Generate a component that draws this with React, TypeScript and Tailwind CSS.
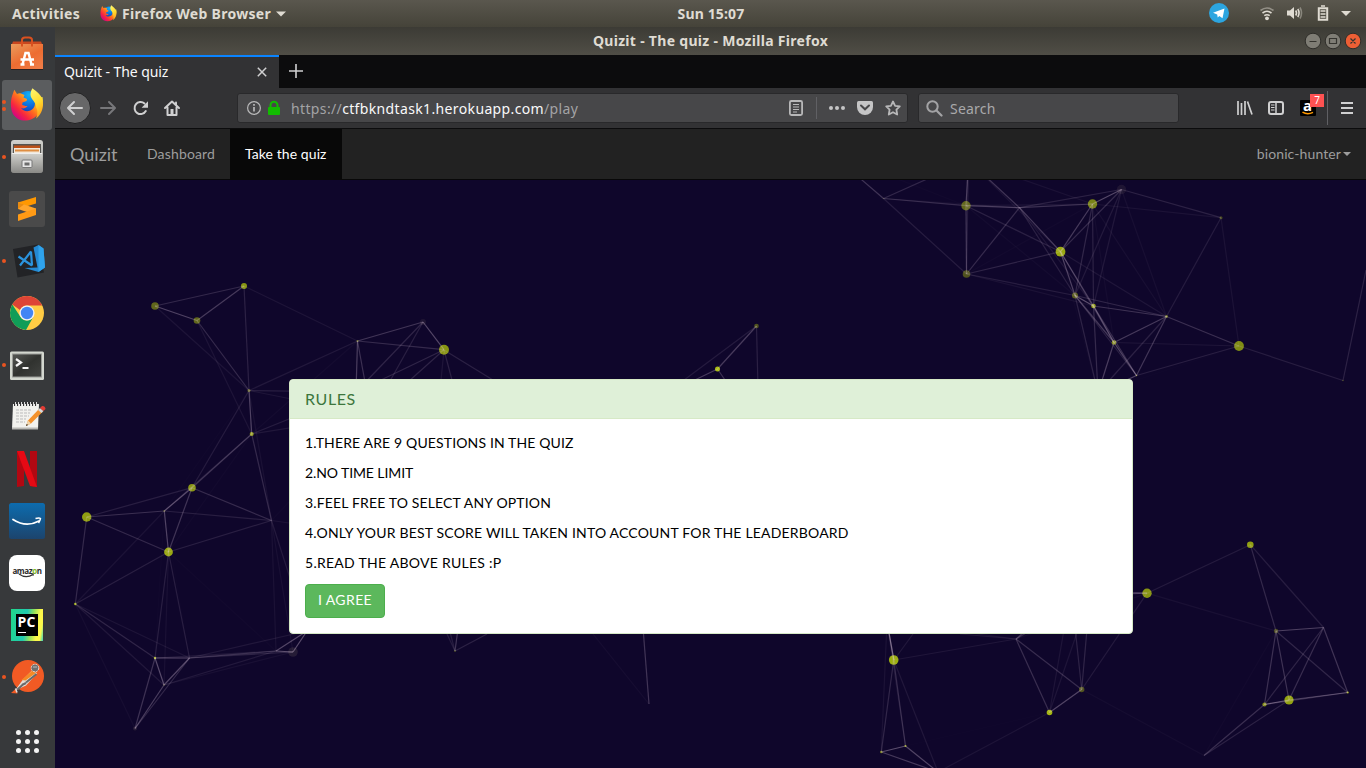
import type { ReactNode } from "react";

/* ---------- particle network ---------- */

type Node = [x: number, y: number, r: number, o: number];

const NODES: Node[] = [
  [155, 306, 3.8, 0.5], [197, 320.5, 3.3, 0.5], [244, 286, 3, 0.75], [249, 390.5, 1.5, 0.45],
  [251.7, 434, 2, 0.8], [192, 487.7, 3.8, 0.75], [86.7, 517, 4.7, 0.8], [164.3, 511, 1, 0.35],
  [271.5, 520.5, 0, 0], [168.5, 552, 4.4, 0.85], [75.3, 604, 1.2, 0.9], [155, 658, 1.2, 0.9],
  [189.5, 658, 0, 0], [164, 685, 0.8, 0.3], [135, 728.5, 2, 0.15], [276, 651, 0, 0],
  [293, 652, 4.8, 0.14], [357.5, 341, 1, 0.5], [423, 322, 3, 0.1], [444, 349.7, 5, 0.75],
  [356, 392, 0, 0], [371, 415, 0, 0], [307, 631, 0, 0],
  [883.5, 198.5, 0.6, 0.2], [966, 205.7, 4.7, 0.5], [966.5, 274, 3.8, 0.4], [1019.5, 207.7, 0, 0],
  [1092.5, 204, 4.7, 0.65], [1060.5, 251.7, 4.9, 0.85], [1121.5, 189.5, 4.7, 0.1],
  [1075, 295.5, 3, 0.45], [1093.5, 306, 2.3, 0.8], [1114, 342.5, 2.3, 0.7], [1166.5, 316.5, 1.3, 0.7],
  [1136.5, 375.5, 0.7, 0.7], [1221, 217.7, 1.5, 0.35], [1239, 346, 4.9, 0.7], [1343, 380.5, 0.8, 0.3],
  [968.5, 160.5, 0, 0], [830, 152.5, 0, 0], [1098, 393, 0, 0],
  [756.5, 326, 2.3, 0.4], [717.5, 369, 2.5, 0.95], [664, 395, 0, 0], [759, 430, 0, 0],
  [893.7, 660, 4.8, 0.88], [1016, 639, 0, 0], [1081.7, 689.5, 2.7, 0.4], [1049.5, 712.5, 2.8, 0.92],
  [881.3, 752, 1.3, 0.6], [905.5, 746, 1.1, 0.8], [938, 772, 4, 0.2], [1147, 593.2, 4.7, 0.75],
  [1250.3, 544.7, 3.3, 0.8], [1276, 631, 2.2, 0.35], [1323.5, 627.5, 0, 0], [1347.7, 692.5, 1.1, 0.85],
  [1289, 700, 4.6, 0.82], [1264.5, 704.5, 2.1, 0.7], [1204, 755.5, 0, 0],
  [887, 622, 0, 0], [1071, 590, 0, 0], [1090, 595, 0, 0], [455, 651, 1, 0.3],
];

const EXTRA: [number, number, number, number, number][] = [
  [444, 350, 441, 380, 0.07], [444, 350, 452, 380, 0.12], [444, 350, 493, 380, 0.12],
  [455, 651, 447, 634, 0.1], [455, 651, 450.5, 634, 0.1], [455, 651, 457.3, 634, 0.22],
  [455, 651, 487, 634, 0.13], [649, 704, 643.5, 634, 0.22], [649, 704, 593, 634, 0.03],
  [894, 660, 913, 634, 0.08], [894, 660, 889.3, 634, 0.3], [1016, 639, 960, 634, 0.08],
  [271.5, 520.5, 289, 523, 0.06], [1343, 380.5, 1366, 270, 0.13],
];

const REACH = 150;
const LINKS = [...EXTRA];
NODES.forEach((a, i) =>
  NODES.slice(i + 1).forEach((b) => {
    const d = Math.hypot(a[0] - b[0], a[1] - b[1]);
    if (d < REACH) LINKS.push([a[0], a[1], b[0], b[1], 0.4 * (1 - d / REACH)]);
  }),
);

function Particles() {
  return (
    <svg className="absolute inset-0 h-full w-full" viewBox="55 180 1311 588">
      {NODES.map(([x, y, r, o], i) => (
        <circle key={i} cx={x} cy={y} r={r} fill={o < 0.2 ? "#b0a080" : "#b1c60c"} opacity={o} />
      ))}
      {LINKS.map(([x1, y1, x2, y2, o], i) => (
        <line key={i} x1={x1} y1={y1} x2={x2} y2={y2} stroke="#f0d8ee" strokeWidth="1.2" opacity={o} />
      ))}
    </svg>
  );
}

/* ---------- icons ---------- */

function Firefox({ size, id }: { size: number; id: string }) {
  return (
    <svg width={size} height={size} viewBox="0 0 34 34">
      <defs>
        <linearGradient id={`${id}o`} x1="0.9" y1="0.1" x2="0.15" y2="0.85">
          <stop offset="0" stopColor="#fff24a" />
          <stop offset="0.3" stopColor="#ffc21c" />
          <stop offset="0.55" stopColor="#ff6d1f" />
          <stop offset="0.8" stopColor="#f7263f" />
          <stop offset="1" stopColor="#d6097c" />
        </linearGradient>
        <radialGradient id={`${id}b`} cx="0.55" cy="0.15" r="0.9">
          <stop offset="0" stopColor="#12b4f5" />
          <stop offset="0.55" stopColor="#0a63d8" />
          <stop offset="1" stopColor="#2a1b8a" />
        </radialGradient>
        <linearGradient id={`${id}y`} x1="0.3" y1="0" x2="0.6" y2="1">
          <stop offset="0" stopColor="#fff36a" />
          <stop offset="0.5" stopColor="#ffdc2e" />
          <stop offset="1" stopColor="#ff9a1a" />
        </linearGradient>
      </defs>
      <circle cx="18" cy="15.5" r="12.5" fill={`url(#${id}b)`} />
      <path d="M2.2 7.5 4.3 1.8 7 6c1.200-.6 2.500-.8 4-.5l3.500 1.500-1 2.500 3.500 1.500-.5 2-4 1.500-.3 2.500c1.500.2 3 1.500 5.300 1-1.500 2.500-4.500 2.800-6.500 2 2 3 7 4.500 11 1.500 3.500-2.700 3.500-7 2-10.500l8.500-2c1.500 9-3 18.500-10.500 22-7 3.200-15 1.500-19-5C.5 21.500.2 13.500 2.200 7.500Z" fill={`url(#${id}o)`} />
      <path d="M22.500.3c3.500 3 8.500 6 10 11.500 1.700 7-.8 14.500-6.500 18.700 1.500-4 2.300-8-.1-11.500C27 14.500 20 11.500 20.500 6c.2-2.500 1-4.200 2-5.700Z" fill={`url(#${id}y)`} />
    </svg>
  );
}

const Svg = ({ children, s = 50 }: { children: ReactNode; s?: number }) => (
  <svg width={s} height={s} viewBox={`0 0 ${s} ${s}`}>{children}</svg>
);

const SoftwareIcon = () => (
  <Svg>
    <defs>
      <linearGradient id="bag" x2="0.7" y2="1"><stop stopColor="#ea9c5d" /><stop offset="0.6" stopColor="#ed6c31" /><stop offset="1" stopColor="#ef7b45" /></linearGradient>
    </defs>
    <path d="M10 16 11 13.500h28l1 2.500z" fill="#c9471f" />
    <path d="M9 16h32v25.500H9z" fill="url(#bag)" />
    <path d="M9 41.500h32" stroke="#2a2020" strokeWidth="1" />
    <path d="M20 18.500v-6.500q0-2.500 3-2.500h4q3 0 3 2.500v6.500" fill="none" stroke="#d9501f" strokeWidth="2" />
    <path d="M20.500 36.500 23.500 25h3l3 11.500M18.500 31.500h13.500M18.500 36.500h4M28 36.500h4" fill="none" stroke="#fff" strokeWidth="2.500" />
  </Svg>
);

const FilesIcon = () => (
  <Svg>
    <defs><linearGradient id="cab" y2="1" x2="0"><stop stopColor="#d2d2ce" /><stop offset="1" stopColor="#8b8b88" /></linearGradient></defs>
    <rect x="9" y="8" width="32" height="33" rx="3" fill="url(#cab)" />
    <path d="M11 12h28v10H11z" fill="#555450" />
    <path d="M12 13.500h26v8H12z" fill="#bd5118" /><path d="M12 16h26v6H12z" fill="#f3e8d8" /><path d="M13 17.500h24v2H13z" fill="#df8e42" />
    <path d="M9.500 21h31v18q0 1.500-1.500 1.500H11q-1.500 0-1.500-1.500z" fill="url(#cab)" />
    <path d="M10 21.500h30" stroke="#eee" />
    <rect x="20" y="28" width="10" height="7.500" rx="1" fill="#e8e8e8" stroke="#777" />
    <rect x="22.500" y="30.500" width="5" height="3" fill="#6c6c6c" />
  </Svg>
);

const SublimeIcon = () => (
  <Svg>
    <rect x="7" y="7" width="36" height="36" rx="3" fill="#4a4a4a" />
    <path d="m16 18.500 18-5.500v6.500L16 25z" fill="#ff9800" />
    <path d="m16 18.500 18 6V31l-18-6z" fill="#ffa52b" />
    <path d="m16 30.500 18-6V31l-18 6z" fill="#ff9a15" />
    <path d="m16 18.500 6 2-6 4.500z" fill="#e98a10" />
  </Svg>
);

const CodeIcon = () => (
  <Svg>
    <path d="m11 13 25-4.500 6 28L15.500 41.500z" fill="#222326" />
    <path d="m31.500 11.500 5-2.500 5 3.500 1.500 19-6.500 4.500-14-4 13-.5z" fill="#2489d3" />
    <path d="m36.500 9 5 3.500 1.500 19-6.500 4.500z" fill="#2fa3ec" />
    <path d="M16.500 20.500 30 29.500m-1-14L18 29.500" stroke="#2b93dd" strokeWidth="2.200" fill="none" />
    <path d="m29 15.500 1 14" stroke="#2b93dd" strokeWidth="2.200" />
  </Svg>
);

const ChromeIcon = () => (
  <Svg>
    <circle cx="25" cy="25" r="17" fill="#fc4" />
    <path d="M10.300 16.500A17 17 0 0 1 39.700 16.500L40 17.500H25A7.600 7.600 0 0 0 18 22z" fill="#de4436" />
    <path d="M10.300 16.500A17 17 0 0 0 24 42l7.500-13.500a7.600 7.600 0 0 1-13.300 0z" fill="#109d58" />
    <circle cx="25" cy="25" r="7.600" fill="#f1f1f1" /><circle cx="25" cy="25" r="6.200" fill="#4285f4" />
  </Svg>
);

const TerminalIcon = () => (
  <Svg>
    <defs><linearGradient id="scr" x2="1" y2="1"><stop stopColor="#555754" /><stop offset="0.5" stopColor="#30322f" /><stop offset="1" stopColor="#414340" /></linearGradient></defs>
    <rect x="8" y="11.500" width="34" height="28.500" rx="1.500" fill="#d3d7cf" />
    <rect x="10" y="13.500" width="30" height="24" fill="#999b97" />
    <rect x="11" y="14.500" width="28" height="22" fill="url(#scr)" />
    <path d="m14 19 5 3.500-5 3.500M20.500 28h6" fill="none" stroke="#f5f5f5" strokeWidth="2.200" />
  </Svg>
);

const NotesIcon = () => (
  <Svg>
    <path d="M11 12h26l-1 25H10z" fill="#f2f2ee" /><path d="M10 35.500h26v2H10z" fill="#b9b9b4" />
    <path d="M12 12h24" stroke="#333" strokeWidth="4" strokeDasharray="1.500 1.500" /><path d="M13 12h24" stroke="#ddd" strokeWidth="4" strokeDasharray="1 2" />
    <path d="M14 18h16M14 21h14M14 24h13M14 27h10M14 30h9" stroke="#bbb" strokeWidth="1" strokeDasharray="3 1" />
    <path d="m24 34 2-5.500L37 17l3.500 3L29 31.500z" fill="#f4922b" /><path d="m26 28.500 3 3-5 2.500z" fill="#eed5ad" /><path d="m24 34 .8-2 1.200 1z" fill="#111" />
    <path d="m36 18 2-2 3.500 3-2 2z" fill="#d8d8d8" /><path d="m38 16 2-2q3-.5 3.500 3l-2 2z" fill="#e23d35" />
  </Svg>
);

const NetflixIcon = () => (
  <Svg>
    <path d="M15 7h7v35l-7 1zM28 7h7v36l-7-1z" fill="#b10812" />
    <path d="M15 7h7l13 36-7-1z" fill="#e50914" />
  </Svg>
);

const PrimeIcon = () => (
  <Svg>
    <defs><linearGradient id="prime" y2="1" x2="0"><stop stopColor="#0d6cae" /><stop offset="1" stopColor="#1c446d" /></linearGradient></defs>
    <rect x="7" y="7" width="36" height="36" rx="2.500" fill="url(#prime)" />
    <path d="M11 23.500q13 8.500 26 1.500" fill="none" stroke="#fff" strokeWidth="1.800" strokeLinecap="round" />
    <path d="M33.500 22.500q4-.8 5 0-.3 2-2 4.500" fill="none" stroke="#fff" strokeWidth="1.500" />
  </Svg>
);

const AmazonIcon = () => (
  <div className="relative flex h-[36px] w-[36px] justify-center rounded-[8px] bg-white pt-[9px] font-['Open_Sans',sans-serif] text-[8px] leading-[14px] font-bold tracking-[-0.4px] text-[#2b2b2b]">
    amaz<span className="text-[#7db928]">o</span>n
    <svg className="absolute top-[18px] left-[9px]" width="18" height="6" viewBox="0 0 18 6">
      <path d="M1 1q7 5 14 .5" fill="none" stroke="#333" strokeWidth="1.200" /><path d="M13 .8h2.500L15 3" fill="none" stroke="#333" strokeWidth="0.800" />
    </svg>
  </div>
);

const PyCharmIcon = () => (
  <div className="flex h-[32px] w-[32px] items-center justify-center bg-[linear-gradient(100deg,#21d789_0%,#20c9b0_45%,#8ee05c_62%,#fcf84a_80%,#fcf84a_90%,#35d1c0_100%)]">
    <div className="relative h-[22px] w-[22px] bg-black pt-px pl-[1.5px] font-['Open_Sans',sans-serif] text-[14px] leading-[14px] font-bold tracking-[0.2px] text-white">
      PC
      <div className="absolute bottom-[3px] left-[2px] h-[1.5px] w-[8px] bg-white" />
    </div>
  </div>
);

const PostmanIcon = () => (
  <Svg>
    <circle cx="26" cy="24" r="16" fill="#f15a24" />
    <path d="m13 38.500 8-11L31 17.500l4 4-11 12z" fill="#e4ddd5" />
    <path d="m19.500 28 11.500-10 3 3-10.500 7.500z" fill="#f58a25" />
    <path d="m24 30.500 10.500-8.500M15.500 37.500l6-5.500M20 33l4-2" stroke="#6a6a6a" strokeWidth="2" fill="none" />
    <circle cx="33" cy="16" r="3.800" fill="#6f6f6f" stroke="#e6ddd6" strokeWidth="1" strokeDasharray="2 1" /><path d="M31 15h4" stroke="#bbb" />
    <path d="m9 41 5-4.500 1.500 5z" fill="#f15a24" />
    <path d="m13.500 36.500 1.500 4" stroke="#ddd" strokeWidth="1.500" />
  </Svg>
);

const DOCK: { name: string; icon: ReactNode; dots?: number }[] = [
  { name: "software", icon: <SoftwareIcon /> },
  { name: "firefox", icon: <Firefox size={34} id="dock" />, dots: 2 },
  { name: "files", icon: <FilesIcon />, dots: 1 },
  { name: "sublime", icon: <SublimeIcon /> },
  { name: "code", icon: <CodeIcon />, dots: 1 },
  { name: "chrome", icon: <ChromeIcon /> },
  { name: "terminal", icon: <TerminalIcon />, dots: 1 },
  { name: "notes", icon: <NotesIcon /> },
  { name: "netflix", icon: <NetflixIcon /> },
  { name: "prime", icon: <PrimeIcon /> },
  { name: "amazon", icon: <AmazonIcon /> },
  { name: "pycharm", icon: <PyCharmIcon /> },
  { name: "postman", icon: <PostmanIcon />, dots: 1 },
];

function Dock() {
  return (
    <aside className="flex w-[55px] shrink-0 flex-col bg-[#37393b]">
      {DOCK.map(({ name, icon, dots = 0 }) => (
        <div key={name} className="relative flex h-[52px] w-[54px] shrink-0 items-center justify-center">
          <div className={dots === 2 ? "flex h-[50px] w-[50px] items-center justify-center rounded-[3px] bg-[#5b5d5f]" : "flex h-[50px] w-[50px] items-center justify-center"}>
            {icon}
          </div>
          <div className="absolute top-0 left-[2px] flex h-full flex-col justify-center gap-[3px]">
            {Array.from({ length: dots }, (_, i) => (
              <span key={i} className="h-[4px] w-[4px] rounded-full bg-[#e95420]" />
            ))}
          </div>
        </div>
      ))}
      <div className="grid w-[54px] flex-1 place-content-center grid-cols-[repeat(3,5px)] gap-[4px] pt-[12px]">
        {Array.from({ length: 9 }, (_, i) => (
          <span key={i} className="h-[5px] w-[5px] rounded-full bg-[#f4f4f4]" />
        ))}
      </div>
    </aside>
  );
}

/* ---------- desktop bars ---------- */

function TopBar() {
  return (
    <header className="flex h-[27px] shrink-0 items-center bg-linear-to-b from-[#5a574e] to-[#454339] font-['Noto_Sans',sans-serif] text-[14px] font-bold text-[#dfdbd2]">
      <span className="w-[97px] pl-[12px] tracking-[0.3px]">Activities</span>
      <span className="flex w-[22px] justify-center"><Firefox size={17} id="bar" /></span>
      <span className="w-[156px] pl-[3px] tracking-[0.3px] whitespace-nowrap">Firefox Web Browser</span>
      <svg className="ml-[1px]" width="10" height="6" viewBox="0 0 10 6"><path d="M0 .5h10L5 5.500z" fill="#dfdbd2" /></svg>
      <span className="ml-[385px] w-[80px] pb-px text-center tracking-[0.15px] whitespace-nowrap">Sun 15:07</span>
      <svg className="ml-auto" width="157" height="27" viewBox="1209 0 157 27">
        <circle cx="1219" cy="13" r="10" fill="#2ca5e0" />
        <path d="m1213 12.800 11.500-4.300-2 9.700-3.200-2.200-1.600 1.600-.5-3z" fill="#fff" />
        <g fill="none" stroke="#dfdbd2" strokeWidth="1.600">
          <path d="M1260.500 10.500q6.500-5 13 0" opacity="0.45" /><path d="M1262.500 13q4.500-3.500 9 0M1264.300 15.700q2.700-2 5.400 0" />
          <path d="M1295.700 10.500q1.700 2.500 0 5M1297.800 9q2.500 4 0 8" /><path d="M1300 7.500q3 5.500 0 11" opacity="0.4" />
          <path d="M1318.800 8.300h8.400v11.400h-8.400z" strokeWidth="2" /><path d="M1321 6h4M1320.500 11h5M1320.500 14h5M1320.500 17h5" />
        </g>
        <circle cx="1267" cy="18.300" r="1.900" fill="#dfdbd2" />
        <path d="M1287 10.500h3l4-3.500v12l-4-3.500h-3z" fill="#dfdbd2" />
        <path d="M1341 11h10l-5 5z" fill="#dfdbd2" />
      </svg>
    </header>
  );
}

function TitleBar() {
  return (
    <div className="flex h-[28px] shrink-0 items-center bg-linear-to-b from-[#3c3b35] to-[#504e46] font-['Noto_Sans',sans-serif] text-[14px] font-bold text-[#dfdbd2]">
      <span className="flex-1 pb-[2px] pl-[80px] text-center tracking-[0.3px]">Quizit - The quiz - Mozilla Firefox</span>
      <svg width="80" height="28" viewBox="1286 27 80 28">
        <g stroke="#2f2e2a"><circle cx="1313" cy="41" r="7.800" fill="#7f7d75" /><circle cx="1333" cy="41" r="7.800" fill="#7f7d75" /><circle cx="1353" cy="41" r="7.800" fill="#ee5f35" /></g>
        <path d="M1309.500 41.500h7M1329.500 38.500h7v5h-7zM1350.500 38.500l5 5m0-5-5 5" fill="none" stroke="#35342f" strokeWidth="1.200" />
      </svg>
    </div>
  );
}

function BrowserChrome() {
  return (
    <div className="font-['Noto_Sans',sans-serif] text-[14px]">
      <div className="flex h-[33px] border-b border-[#0c0c0d] bg-[#0c0c0d]">
        <div className="flex h-[33px] w-[224px] items-center border-t-2 border-[#0a84ff] bg-[#323234] pl-[9px] text-[#f9f9fa]">
          <span className="flex-1 pb-[2px] tracking-[-0.08px]">Quizit - The quiz</span>
          <svg className="mr-[12px] mb-px" width="10" height="10" viewBox="0 0 10 10"><path d="m.8.8 8.400 8.400M9.200.8.8 9.200" stroke="#d0d0d1" strokeWidth="1.500" /></svg>
        </div>
        <svg className="mt-[9px] ml-[10px]" width="14" height="14" viewBox="0 0 14 14"><path d="M7 0v14M0 7h14" stroke="#d0d0d1" strokeWidth="1.600" /></svg>
      </div>
      <div className="flex h-[41px] items-center border-b border-[#0c0c0d] bg-[#323234]">
        <svg width="182" height="40" viewBox="55 88 182 40">
          <circle cx="75" cy="108" r="15.500" fill="#676768" stroke="#222223" />
          <g fill="none" stroke="#d0d0d1" strokeWidth="2" strokeLinecap="round" strokeLinejoin="round">
            <path d="M82 108H68.500M74 102l-6 6 6 6" />
            <path d="M101 108h13.500M109 102l6 6-6 6" stroke="#77777a" />
            <path d="M144.500 103.500a6 6 0 1 0 1.300 7.500" />
            <path d="m165 108 7-6.500 7 6.500M167.500 107.500v7.500h9v-7.500" />
            <path d="M176 102.500v2" />
          </g>
          <path d="M148 101.300v6.400h-6.400z" fill="#d0d0d1" />
          <path d="M170.500 109h3v5h-3z" fill="#d0d0d1" />
        </svg>
        <div className="flex h-[30px] w-[671px] items-center rounded-[3px] border border-[#29292b] bg-[#474749]">
          <svg className="ml-[8px]" width="36" height="18" viewBox="246 99 36 18">
            <circle cx="254" cy="108" r="6.400" fill="none" stroke="#b8b8b9" strokeWidth="1.200" />
            <path d="M254 107v4.500M254 104v1.700" stroke="#b8b8b9" strokeWidth="1.700" />
            <rect x="268" y="107" width="12" height="8" rx="1" fill="#12bc00" /><path d="M270.500 108v-2.700a3.500 3.500 0 0 1 7 0v2.700" fill="none" stroke="#12bc00" strokeWidth="2" />
          </svg>
          <span className="ml-[9px] flex-1 tracking-[0.36px] whitespace-nowrap text-[#a3a3a5]">https://<span className="text-[#f9f9fa]">ctfbkndtask1.herokuapp.com</span>/play</span>
          <svg width="120" height="28" viewBox="787 94 120 28">
            <g fill="none" stroke="#b8b8b9" strokeWidth="1.800">
              <rect x="789.900" y="101" width="12.200" height="14" rx="1.500" /><path d="M793 104.500h6M793 107h6M793 109.500h6M793 112h4" strokeWidth="1" />
              <path d="m893 101.500 2.100 4.300 4.700.6-3.400 3.300.8 4.800-4.200-2.300-4.200 2.300.8-4.800-3.400-3.300 4.700-.6z" strokeLinejoin="round" />
            </g>
            <path d="M816.500 97v22" stroke="#606064" />
            <g fill="#c5c5c6"><circle cx="831" cy="108" r="2" /><circle cx="837" cy="108" r="2" /><circle cx="843" cy="108" r="2" />
              <path d="M858.500 101h13q1.500 0 1.500 1.500v4.500a8 8 0 0 1-16 0v-4.500q0-1.500 1.500-1.500z" /></g>
            <path d="m861 105.500 4 3.800 4-3.800" fill="none" stroke="#474749" strokeWidth="2" strokeLinecap="round" />
          </svg>
        </div>
        <div className="ml-[10px] flex h-[30px] w-[261px] items-center rounded-[3px] border border-[#29292b] bg-[#474749] text-[#a9a9ab]">
          <svg className="ml-[7px]" width="17" height="17" viewBox="0 0 17 17"><circle cx="6.500" cy="6.500" r="5.200" fill="none" stroke="#a3a3a5" strokeWidth="2" /><path d="m10.500 10.500 5 5" stroke="#a3a3a5" strokeWidth="2.200" strokeLinecap="round" /></svg>
          <span className="ml-[7px] tracking-[0.2px]">Search</span>
        </div>
        <div className="relative ml-auto h-[40px] w-[136px]">
          <svg width="136" height="40" viewBox="1230 88 136 40">
            <g fill="none" stroke="#d0d0d1" strokeWidth="2">
              <path d="M1238 101v14M1241.500 103v12M1245 101v14M1247.500 101.500l4.500 13" strokeWidth="1.700" />
              <rect x="1269" y="102" width="14" height="12" rx="2" /><path d="M1276 102v12" strokeWidth="1.500" /><path d="M1271 105h3.500M1271 107.500h3.500M1271 110h3.500" strokeWidth="1" />
              <path d="M1341 103h12M1341 108h12M1341 113h12" />
            </g>
            <rect x="1300" y="100" width="16" height="16" rx="1" fill="#000" />
            <path d="M1302.500 112.200q5 3 10.500.2" fill="none" stroke="#f90" strokeWidth="1.500" />
            <path d="M1327.500 91v34" stroke="#606064" />
          </svg>
          <span className="absolute top-[9px] left-[73px] text-[15px] leading-[16px] font-bold text-white">a</span>
          <span className="absolute top-[6px] left-[80px] flex h-[13px] w-[14px] items-center justify-center bg-[#fe5252] text-[10px] leading-[13px] text-white">7</span>
        </div>
      </div>
    </div>
  );
}

/* ---------- quiz page ---------- */

const RULES = [
  { text: "1.THERE ARE 9 QUESTIONS IN THE QUIZ", track: "tracking-[0.14px]" },
  { text: "2.NO TIME LIMIT", track: "tracking-[-0.1px]" },
  { text: "3.FEEL FREE TO SELECT ANY OPTION", track: "tracking-[0.15px]" },
  { text: "4.ONLY YOUR BEST SCORE WILL TAKEN INTO ACCOUNT FOR THE LEADERBOARD", track: "tracking-[0.19px]" },
  { text: "5.READ THE ABOVE RULES :P", track: "tracking-[0.27px]" },
];

function QuizPage() {
  return (
    <div className="flex min-h-0 flex-1 flex-col font-['Lato',sans-serif] text-[14px] leading-[20px]">
      <nav className="flex h-[51px] shrink-0 items-stretch border-b border-[#080808] bg-[#222] text-[#9d9d9d]">
        <span className="flex w-[77px] items-center pb-px pl-[15px] text-[18px]">Quizit</span>
        <span className="flex w-[98px] items-center pl-[15px] tracking-[0.15px]">Dashboard</span>
        <span className="flex w-[112px] items-center bg-[#080808] pl-[15px] tracking-[0.08px] text-white">Take the quiz</span>
        <span className="ml-auto flex items-center gap-[2px] pr-[15px] tracking-[0.1px]">
          bionic-hunter
          <svg width="8" height="4" viewBox="0 0 8 4"><path d="M0 0h8L4 4z" fill="#9d9d9d" /></svg>
        </span>
      </nav>
      <main className="relative flex-1 overflow-hidden bg-[#0f062b] pt-[199px] pl-[234px]">
        <Particles />
        <section className="relative w-[844px] rounded-[4px] border border-[#d6e9c6] bg-white text-black">
          <h3 className="flex h-[39px] items-center rounded-t-[3px] border-b border-[#d6e9c6] bg-[#dff0d8] pb-px pl-[15px] text-[16px] tracking-[0.6px] text-[#3c763d]">RULES</h3>
          <div className="p-[15px] pt-[14px]">
            {RULES.map((r) => (
              <p key={r.text} className={`mb-[10px] whitespace-nowrap ${r.track}`}>{r.text}</p>
            ))}
            <button className="mt-[11px] block h-[34px] w-[80px] rounded-[4px] border border-[#4cae4c] bg-[#5cb85c] pb-[2px] tracking-[0.4px] text-white">I AGREE</button>
          </div>
        </section>
      </main>
    </div>
  );
}

export default function App() {
  return (
    <div className="flex h-[768px] w-[1366px] flex-col overflow-hidden">
      <TopBar />
      <div className="flex min-h-0 flex-1">
        <Dock />
        <div className="flex min-w-0 flex-1 flex-col">
          <TitleBar />
          <BrowserChrome />
          <QuizPage />
        </div>
      </div>
    </div>
  );
}
